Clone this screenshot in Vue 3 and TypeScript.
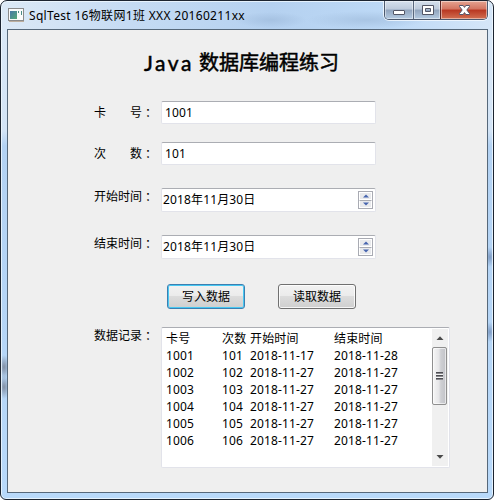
<script setup lang="ts">
import { ref } from 'vue'

interface DataRow {
  card: string
  count: string
  start: string
  end: string
}

const cardNo = ref('1001')
const times = ref('101')
const startDate = ref('2018年11月30日')
const endDate = ref('2018年11月30日')

const rows: DataRow[] = [
  { card: '卡号', count: '次数', start: '开始时间', end: '结束时间' },
  { card: '1001', count: '101', start: '2018-11-17', end: '2018-11-28' },
  { card: '1002', count: '102', start: '2018-11-27', end: '2018-11-27' },
  { card: '1003', count: '103', start: '2018-11-27', end: '2018-11-27' },
  { card: '1004', count: '104', start: '2018-11-27', end: '2018-11-27' },
  { card: '1005', count: '105', start: '2018-11-27', end: '2018-11-27' },
  { card: '1006', count: '106', start: '2018-11-27', end: '2018-11-27' },
]
</script>

<template>
  <div class="window">
    <header class="titlebar">
      <svg class="app-icon" width="16" height="14" viewBox="0 0 16 14">
        <defs>
          <linearGradient id="scene" x1="0" y1="0" x2="1" y2="1">
            <stop offset="0" stop-color="#4878a8" />
            <stop offset="1" stop-color="#55a877" />
          </linearGradient>
        </defs>
        <rect x="0.5" y="0.5" width="15" height="12" fill="#fbfbfb" stroke="#8b8b8b" />
        <path d="M1 13.5H16" stroke="#bcae9e" />
        <rect x="2" y="3" width="7" height="8" fill="url(#scene)" />
        <path d="M10.5 3v2M13.5 3v4" stroke="#4b8b85" />
      </svg>
      <span class="caption">SqlTest 16物联网1班 XXX 20160211xx</span>
      <div class="controls">
        <button class="ctl">
          <svg width="14" height="18" viewBox="0 0 14 18">
            <rect x="1.5" y="9.5" width="11" height="4" rx="0.5" fill="#fff" stroke="#535666" />
          </svg>
        </button>
        <button class="ctl ctl-max">
          <svg width="13" height="18" viewBox="0 0 13 18">
            <path d="M1.5 4.5h11v9h-11zM4.5 7.5v3h5v-3z" fill="#fff" fill-rule="evenodd" stroke="#535666" />
          </svg>
        </button>
        <button class="ctl ctl-close">
          <svg width="13" height="18" viewBox="0 0 13 18">
            <path d="M1.5 4.5h3.7l1.3 1.9 1.3-1.9h3.7v1L8.8 9l2.7 3.5v1H7.8l-1.3-1.9-1.3 1.9H1.5v-1L4.2 9 1.5 5.5z" fill="#fff" stroke="#555568" />
          </svg>
        </button>
      </div>
    </header>

    <main class="client">
      <h1 class="heading"><span class="java">Java</span><span>数据库编程练习</span></h1>

      <div class="row row-card">
        <label class="label spread"><span>卡</span><span>号<span class="colon">：</span></span></label>
        <div class="field">{{ cardNo }}</div>
      </div>
      <div class="row row-times">
        <label class="label spread"><span>次</span><span>数<span class="colon">：</span></span></label>
        <div class="field">{{ times }}</div>
      </div>
      <div class="row row-start">
        <label class="label">开始时间<span class="colon">：</span></label>
        <div class="field spinner">
          <span>{{ startDate }}</span>
          <div class="steps">
            <i><svg width="6" height="4" viewBox="0 0 6 4"><path d="M0 3.5L3 0.5 6 3.5z" /></svg></i>
            <i><svg width="6" height="4" viewBox="0 0 6 4"><path d="M0 0.5L3 3.5 6 0.5z" /></svg></i>
          </div>
        </div>
      </div>
      <div class="row row-end">
        <label class="label">结束时间<span class="colon">：</span></label>
        <div class="field spinner">
          <span>{{ endDate }}</span>
          <div class="steps">
            <i><svg width="6" height="4" viewBox="0 0 6 4"><path d="M0 3.5L3 0.5 6 3.5z" /></svg></i>
            <i><svg width="6" height="4" viewBox="0 0 6 4"><path d="M0 0.5L3 3.5 6 0.5z" /></svg></i>
          </div>
        </div>
      </div>

      <div class="actions">
        <button class="btn primary">写入数据</button>
        <button class="btn">读取数据</button>
      </div>

      <div class="row row-records">
        <label class="label">数据记录<span class="colon">：</span></label>
        <div class="records">
          <div class="lines">
            <div v-for="row in rows" :key="row.card" class="line">
              <span>{{ row.card }}</span>
              <span>{{ row.count }}</span>
              <span>{{ row.start }}</span>
              <span>{{ row.end }}</span>
            </div>
          </div>
          <div class="scrollbar">
            <div class="arrow"><svg width="8" height="4" viewBox="0 0 8 4"><path d="M0.5 4L4 0.3 7.5 4z" fill="#4a4a4a" /></svg></div>
            <div class="thumb"><span class="grip"></span></div>
            <div class="arrow arrow-down"><svg width="8" height="4" viewBox="0 0 8 4"><path d="M0.5 0L4 3.7 7.5 0z" fill="#4a4a4a" /></svg></div>
          </div>
        </div>
      </div>
    </main>
  </div>
</template>

<style>
html,
body {
  margin: 0;
  background: #fff;
}
</style>

<style scoped>
* {
  box-sizing: border-box;
}
.window {
  width: 494px;
  height: 500px;
  padding: 0 5px 6px 6px;
  border: 1px solid #1c2430;
  border-radius: 7px 7px 6px 6px;
  background:
    radial-gradient(ellipse 6px 12px at 3px 366px, #8290a5, transparent),
    radial-gradient(ellipse 6px 12px at 3px 386px, #8290a5, transparent),
    radial-gradient(ellipse 6px 10px at 489px 256px, #7f9cc4, transparent),
    radial-gradient(ellipse 6px 10px at 489px 331px, #7f9cc4, transparent),
    radial-gradient(ellipse 36px 8px at 270px 19px, #a6c2e2, transparent),
    radial-gradient(ellipse 60px 9px at 365px 19px, #a9c5e4, transparent),
    linear-gradient(90deg, #dce9f6 0, #c5dbf3 130px, #b5d1f0 270px, #bdd9f6 390px, #d5e6f8 492px) 0 0 / 100% 29px no-repeat,
    linear-gradient(#dbe9f7 0, #d3e4f6 130px, #b3d2f3 145px, #b8d9fa 100%);
  box-shadow: inset 0 0 0 1px rgba(240, 249, 255, 0.8);
  font-family: "Noto Sans", "Noto Sans CJK SC", sans-serif;
  font-size: 12px;
  color: #000;
  overflow: hidden;
}
button {
  margin: 0;
  padding: 0;
  font: inherit;
}
.titlebar {
  display: flex;
  height: 28px;
  padding-left: 1px;
}
.app-icon {
  margin-top: 7px;
  flex: none;
}
.caption {
  margin-left: 5px;
  height: 28px;
  line-height: 29px;
  letter-spacing: 0.32px;
  white-space: nowrap;
}
.controls {
  display: flex;
  margin-left: auto;
  width: 104px;
  height: 19px;
  border: 1px solid #4c596e;
  border-top: 0;
  border-radius: 0 0 5px 5px;
  box-shadow: 0 0 0 1px rgba(245, 250, 255, 0.8);
  overflow: hidden;
}
.ctl {
  display: flex;
  justify-content: center;
  width: 28px;
  border: 0;
  background: linear-gradient(#d5e0ed 0, #bdcadb 45%, #91a4bd 50%, #b5cbe2 100%);
  box-shadow: inset 0 0 0 1px rgba(255, 255, 255, 0.45);
}
.ctl-max {
  width: 27px;
  border-left: 1px solid #59677c;
}
.ctl-close {
  width: 47px;
  border-left: 1px solid #5e2725;
  background: linear-gradient(#e5a391 0, #d37460 45%, #b83621 50%, #d27052 100%);
}
.client {
  width: 481px;
  height: 464px;
  padding-left: 86px;
  border: 1px solid #56687a;
  background: #efefef;
}
.heading {
  display: flex;
  gap: 5px;
  height: 71px;
  margin: 0;
  padding-left: 50px;
  font-size: 20px;
  font-weight: 400;
  line-height: 65px;
  white-space: nowrap;
}
.heading span {
  -webkit-text-stroke: 0.5px #000;
}
.heading .java {
  width: 50px;
  font-family: Lato, sans-serif;
  font-size: 21px;
  letter-spacing: 2.6px;
}
.row {
  display: flex;
}
.label {
  width: 67px;
  height: 18px;
  flex: none;
  line-height: 18px;
  white-space: nowrap;
}
.colon {
  margin-left: 3px;
}
.spread {
  display: flex;
  gap: 24px;
}
.field {
  width: 215px;
  height: 23px;
  padding-left: 3px;
  border: 1px solid #e2e3ea;
  border-top-color: #abadb3;
  border-radius: 2px;
  background: #fff;
  line-height: 21px;
  letter-spacing: 0.14px;
}
.row-card {
  height: 41px;
}
.row-times {
  height: 46px;
}
.row-start {
  height: 47px;
}
.row-card .label,
.row-times .label {
  margin-top: 3px;
}
.row-end {
  height: 49px;
}
.spinner {
  display: flex;
  justify-content: space-between;
  height: 24px;
  padding: 2px 2px 0 1px;
  line-height: 18px;
}
.steps {
  width: 15px;
  height: 18px;
  border: 1px solid #a9abb3;
}
.steps i {
  display: flex;
  align-items: center;
  justify-content: center;
  height: 8px;
  border: 1px solid #fff;
  background: #e9eaed;
}
.steps i + i {
  border-top: 1px solid #a9abb3;
}
.steps path {
  fill: #4765af;
}
.actions {
  display: flex;
  gap: 33px;
  height: 43px;
  padding-left: 73px;
}
.btn {
  width: 78px;
  height: 25px;
  border: 1px solid #707070;
  border-radius: 3px;
  background: linear-gradient(#f2f2f2 0, #ebebeb 48%, #dcdcdc 50%, #cfcfcf 100%);
  box-shadow: inset 0 0 0 1px rgba(255, 255, 255, 0.8);
  line-height: 22px;
  color: #000;
}
.primary {
  border-color: #3c7fb1;
  box-shadow: inset 0 0 0 1px #48c8f2;
}
.records {
  display: flex;
  justify-content: space-between;
  width: 289px;
  height: 141px;
  padding: 1px 1px 1px 4px;
  border: 1px solid #e2e3ea;
  border-top-color: #abadb3;
  border-radius: 2px;
  background: #fff;
}
.lines {
  padding-top: 1px;
}
.line {
  display: grid;
  grid-template-columns: 56px 28px 84px 80px;
  height: 17px;
  line-height: 17px;
  letter-spacing: 0.14px;
  white-space: nowrap;
}
.scrollbar {
  display: flex;
  flex-direction: column;
  width: 16px;
  height: 137px;
  background: #f0f0f0;
}
.arrow {
  display: flex;
  align-items: center;
  justify-content: center;
  height: 18px;
}
.arrow-down {
  margin-top: auto;
}
.thumb {
  display: flex;
  align-items: center;
  justify-content: center;
  width: 15px;
  height: 58px;
  border: 1px solid #8f8f8f;
  border-radius: 2px;
  background: linear-gradient(90deg, #f6f6f6 0, #e6e6e8 45%, #cecfd3 60%, #c2c3c8 100%);
  box-shadow: inset 0 0 0 1px rgba(255, 255, 255, 0.6);
}
.grip {
  width: 7px;
  height: 8px;
  background: repeating-linear-gradient(#4d4d52 0, #4d4d52 1px, #8a8a8f 1px, #8a8a8f 2px, #f4f4f4 2px, #f4f4f4 3px);
}
</style>
